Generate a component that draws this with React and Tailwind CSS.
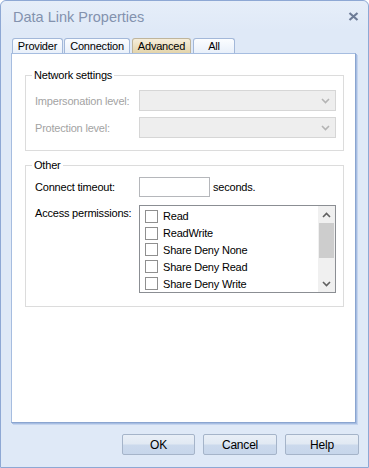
export default function App() {
  const items = ["Read", "ReadWrite", "Share Deny None", "Share Deny Read", "Share Deny Write"];
  const Chevron = ({ up, color = "#606060" }) => (
    <svg width="9" height="6" viewBox="0 0 9 6" className="block">
      <path d={up ? "M1 5 L4.5 1.5 L8 5" : "M1 1 L4.5 4.5 L8 1"} fill="none" stroke={color} strokeWidth="1.6" />
    </svg>
  );
  return (
    <div className="w-[369px] h-[468px] bg-[#dfe9f7] border border-[#8ea8d4] rounded-t-[6px] flex flex-col font-['Liberation_Sans',Arial,sans-serif] text-[11px] tracking-[-0.2px] text-black leading-[14px] whitespace-nowrap">
      <div className="h-[30px] shrink-0 flex items-center justify-between pl-[12px] pr-[9px] bg-gradient-to-b from-[#e6eef9] to-[#dfe9f7] rounded-t-[6px]">
        <span className="text-[14.5px] tracking-normal leading-[18px] text-[#8392ae] pt-[1px]">Data Link Properties</span>
        <svg width="11" height="9" viewBox="0 0 11 9" className="block mt-[1px]">
          <path d="M1.5 1 L9.5 8 M9.5 1 L1.5 8" stroke="#6d7c97" strokeWidth="2.2" />
        </svg>
      </div>
      <div className="pl-[10px] pr-[12px] pt-[7px] flex flex-col">
        <div className="h-[15px] flex items-stretch gap-[1px] pl-[1px]">
          <div className="w-[51px] flex items-center justify-center border border-b-0 border-[#a3b8d9] rounded-t-[3px] bg-gradient-to-b from-[#fbfdff] to-[#e9f0fa]">Provider</div>
          <div className="w-[66px] flex items-center justify-center border border-b-0 border-[#a3b8d9] rounded-t-[3px] bg-gradient-to-b from-[#fbfdff] to-[#e9f0fa]">Connection</div>
          <div className="w-[59px] ml-[1px] flex items-center justify-center border border-b-0 border-[#bfb59c] rounded-t-[3px] bg-gradient-to-b from-[#f6eedb] to-[#e3d4ab]">Advanced</div>
          <div className="w-[42px] ml-[1px] flex items-center justify-center border border-b-0 border-[#a3b8d9] rounded-t-[3px] bg-gradient-to-b from-[#fbfdff] to-[#e9f0fa]">All</div>
        </div>
        <div className="h-[370px] bg-white border border-[#a6bde0] border-r-[#8aa5d0] border-b-[#8aa5d0] shadow-[1px_1px_0_#a6bde2,2px_2px_0_#c4d4ee] pt-[14px] pl-[13px] pr-[11px]">
          <fieldset className="border border-[#dcdcdc] p-0 m-0 min-w-0">
            <legend className="ml-[6px] px-[2px] leading-[14px]">Network settings</legend>
            <div className="pt-[8px] pb-[12px] pl-[9px] pr-[7px] flex flex-col gap-[6px]">
              {["Impersonation level:", "Protection level:"].map((l) => (
                <div key={l} className="flex items-center">
                  <span className="w-[104px] text-[#a3a3a3]">{l}</span>
                  <div className="w-[197px] h-[21px] bg-[#eeeeee] border border-[#d6d6d6] flex items-center justify-end pr-[5px]">
                    <Chevron color="#b4b4b4" />
                  </div>
                </div>
              ))}
            </div>
          </fieldset>
          <fieldset className="border border-[#dcdcdc] p-0 m-0 mt-[7px] min-w-0">
            <legend className="ml-[6px] px-[2px] leading-[14px]">Other</legend>
            <div className="pt-[5px] pb-[13px] pl-[9px] pr-[7px] flex flex-col gap-[8px]">
              <div className="flex items-center">
                <span className="w-[104px]">Connect timeout:</span>
                <div className="w-[71px] h-[20px] bg-white border border-[#b5b7bb]" />
                <span className="ml-[3px]">seconds.</span>
              </div>
              <div className="flex items-start">
                <span className="w-[104px] pt-[1px]">Access permissions:</span>
                <div className="w-[197px] h-[88px] border border-[#8b8e93] flex">
                  <div className="flex-1 flex flex-col pt-[2px] pl-[5px]">
                    {items.map((t) => (
                      <div key={t} className="h-[17px] flex items-center gap-[5px]">
                        <div className="w-[13px] h-[13px] border border-[#8f8f8f] bg-white" />
                        <span>{t}</span>
                      </div>
                    ))}
                  </div>
                  <div className="w-[17px] bg-[#f0f0f0] flex flex-col">
                    <div className="h-[17px] flex items-center justify-center"><Chevron up /></div>
                    <div className="h-[35px] mx-[1px] bg-[#cdcdcd]" />
                    <div className="flex-1" />
                    <div className="h-[17px] flex items-center justify-center"><Chevron /></div>
                  </div>
                </div>
              </div>
            </div>
          </fieldset>
        </div>
      </div>
      <div className="mt-[11px] flex justify-end gap-[8px] pr-[9px]">
        {[["OK", "w-[73px]"], ["Cancel", "w-[74px]"], ["Help", "w-[74px]"]].map(([t, w]) => (
          <div key={t} className={`${w} h-[21px] rounded-[2px] border border-[#a5b4c9] flex items-center justify-center text-[12px] bg-[linear-gradient(#e9eff7_0%,#e1e9f3_48%,#cbd9ec_52%,#c7d6eb_100%)]`}>{t}</div>
        ))}
      </div>
    </div>
  );
}
